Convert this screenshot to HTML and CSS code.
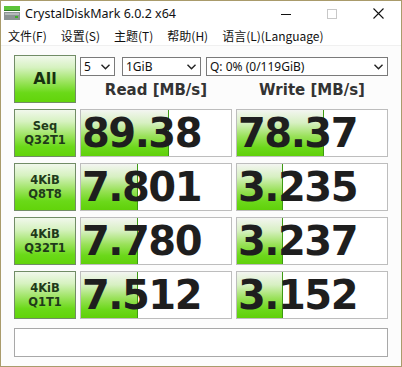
FILE: index.html
```html
<!DOCTYPE html>
<html lang="zh-CN">
<head>
    <meta charset="UTF-8">
    <title>CrystalDiskMark 6.0.2 x64</title>
    <link rel="stylesheet" href="styles.css">
</head>
<body>
    <div class="titlebar">
        <svg class="app-icon" width="16" height="14" viewBox="0 0 16 14">
            <rect x="0" y="0" width="16" height="5" fill="#5cc43a"/>
            <rect x="0" y="4" width="16" height="1" fill="#2f7a22"/>
            <rect x="0" y="6" width="16" height="8" fill="#8c9494"/>
            <rect x="1" y="7" width="14" height="2" fill="#b4baba"/>
            <rect x="11" y="10" width="3" height="2" fill="#3fae2a"/>
        </svg>
        <span class="title">CrystalDiskMark 6.0.2 x64</span>
        <div class="controls">
            <span class="ctl"><svg width="10" height="10" viewBox="0 0 10 10"><line x1="0" y1="5.5" x2="10" y2="5.5" stroke="#111" stroke-width="1"/></svg></span>
            <span class="ctl"><svg width="10" height="10" viewBox="0 0 10 10"><rect x="0.5" y="0.5" width="9" height="9" fill="none" stroke="#c8c8c8" stroke-width="1"/></svg></span>
            <span class="ctl"><svg width="11" height="11" viewBox="0 0 11 11"><path d="M0.5 0.5 L10.5 10.5 M10.5 0.5 L0.5 10.5" stroke="#111" stroke-width="1.1"/></svg></span>
        </div>
    </div>
    <div class="menubar">
        <span>文件(F)</span>
        <span>设置(S)</span>
        <span>主题(T)</span>
        <span>帮助(H)</span>
        <span>语言(L)(Language)</span>
    </div>
    <div class="main">
        <div class="grid">
            <div class="btn btn-all">All</div>
            <div class="top-area">
                <div class="selects">
                    <div class="sel sel-count">5<svg class="chev" width="9" height="6" viewBox="0 0 9 6"><polyline points="0.5,0.8 4.5,4.8 8.5,0.8" fill="none" stroke="#222" stroke-width="1.4"/></svg></div>
                    <div class="sel sel-size">1GiB<svg class="chev" width="9" height="6" viewBox="0 0 9 6"><polyline points="0.5,0.8 4.5,4.8 8.5,0.8" fill="none" stroke="#222" stroke-width="1.4"/></svg></div>
                    <div class="sel sel-drive">Q: 0% (0/119GiB)<svg class="chev" width="9" height="6" viewBox="0 0 9 6"><polyline points="0.5,0.8 4.5,4.8 8.5,0.8" fill="none" stroke="#222" stroke-width="1.4"/></svg></div>
                </div>
                <div class="heads">
                    <div class="head">Read [MB/s]</div>
                    <div class="head">Write [MB/s]</div>
                </div>
            </div>

            <div class="btn">Seq<br>Q32T1</div>
            <div class="result"><div class="fill" style="width: 88px"></div><span>89.38</span></div>
            <div class="result"><div class="fill" style="width: 87px"></div><span>78.37</span></div>

            <div class="btn">4KiB<br>Q8T8</div>
            <div class="result"><div class="fill" style="width: 57px"></div><span>7.801</span></div>
            <div class="result"><div class="fill" style="width: 46px"></div><span>3.235</span></div>

            <div class="btn">4KiB<br>Q32T1</div>
            <div class="result"><div class="fill" style="width: 57px"></div><span>7.780</span></div>
            <div class="result"><div class="fill" style="width: 46px"></div><span>3.237</span></div>

            <div class="btn">4KiB<br>Q1T1</div>
            <div class="result"><div class="fill" style="width: 57px"></div><span>7.512</span></div>
            <div class="result"><div class="fill" style="width: 46px"></div><span>3.152</span></div>
        </div>
        <div class="comment"></div>
    </div>
</body>
</html>
```

FILE: styles.css
```css
html, body {
    margin: 0;
    padding: 0;
}
body {
    width: 402px;
    height: 367px;
    box-sizing: border-box;
    border: 1px solid #a99b6b;
    background: #fcfcfc;
    font-family: "Noto Sans", "Noto Sans CJK SC", sans-serif;
    overflow: hidden;
}
.titlebar {
    height: 25px;
    display: flex;
    align-items: center;
    background: #fff;
}
.app-icon {
    margin-left: 3px;
    margin-top: -1px;
}
.title {
    margin-left: 5px;
    font-size: 12.5px;
    color: #111;
}
.controls {
    margin-left: auto;
    display: flex;
}
.ctl {
    width: 46px;
    height: 25px;
    display: flex;
    align-items: center;
    justify-content: center;
}
.menubar {
    height: 19px;
    display: flex;
    align-items: center;
    padding-left: 7px;
    gap: 14px;
    background: #fff;
    border-bottom: 1px solid #f0f0f0;
    font-family: "Noto Sans CJK SC", sans-serif;
    font-size: 12px;
    color: #111;
}
.main {
    padding: 9px 13px 0 13px;
}
.grid {
    display: grid;
    grid-template-columns: 62px 152px 152px;
    grid-auto-rows: 48px;
    column-gap: 4px;
    row-gap: 6px;
}
.btn {
    box-sizing: border-box;
    border: 1px solid #718c66;
    background: linear-gradient(#f1f8ec 0%, #d6f2c0 25%, #9de461 55%, #6ad918 80%, #62d40a 100%);
    display: flex;
    align-items: center;
    justify-content: center;
    text-align: center;
    font-family: "DejaVu Sans", sans-serif;
    font-weight: bold;
    font-size: 11.5px;
    line-height: 14px;
    color: #1f3a1a;
}
.btn-all {
    font-size: 16px;
    color: #17300f;
}
.top-area {
    grid-column: 2 / 4;
    display: flex;
    flex-direction: column;
}
.selects {
    display: flex;
    margin-top: 2px;
    height: 19px;
}
.sel {
    position: relative;
    box-sizing: border-box;
    height: 19px;
    border: 1px solid #7a7a7a;
    background: #fff;
    font-size: 12px;
    line-height: 17px;
    padding-left: 3px;
    color: #111;
}
.sel-count {
    width: 35px;
}
.sel-size {
    width: 79px;
    margin-left: 7px;
}
.sel-drive {
    width: 182px;
    margin-left: 5px;
}
.chev {
    position: absolute;
    right: 4px;
    top: 6px;
}
.heads {
    display: flex;
    gap: 4px;
    margin-top: 5px;
}
.head {
    width: 152px;
    text-align: center;
    font-family: "DejaVu Sans", sans-serif;
    font-weight: bold;
    font-size: 15px;
    color: #333;
}
.result {
    position: relative;
    box-sizing: border-box;
    border: 1px solid #bdbdbd;
    background: #fff;
    display: flex;
    align-items: center;
    overflow: hidden;
}
.fill {
    position: absolute;
    left: 0;
    top: 0;
    bottom: 0;
    box-sizing: border-box;
    border-right: 1px solid #3d9a12;
    background: linear-gradient(#f3f5f1 0%, #d7f0c2 28%, #98e157 58%, #6bd81a 82%, #60d00a 100%);
}
.result span {
    position: relative;
    padding-left: 1px;
    font-family: "DejaVu Sans", sans-serif;
    font-weight: bold;
    font-size: 40px;
    letter-spacing: -1.5px;
    color: #1e1e1e;
}
.comment {
    margin-top: 9px;
    height: 29px;
    box-sizing: border-box;
    border: 1px solid #a8a8a8;
    background: #fff;
    width: 374px;
}
```
